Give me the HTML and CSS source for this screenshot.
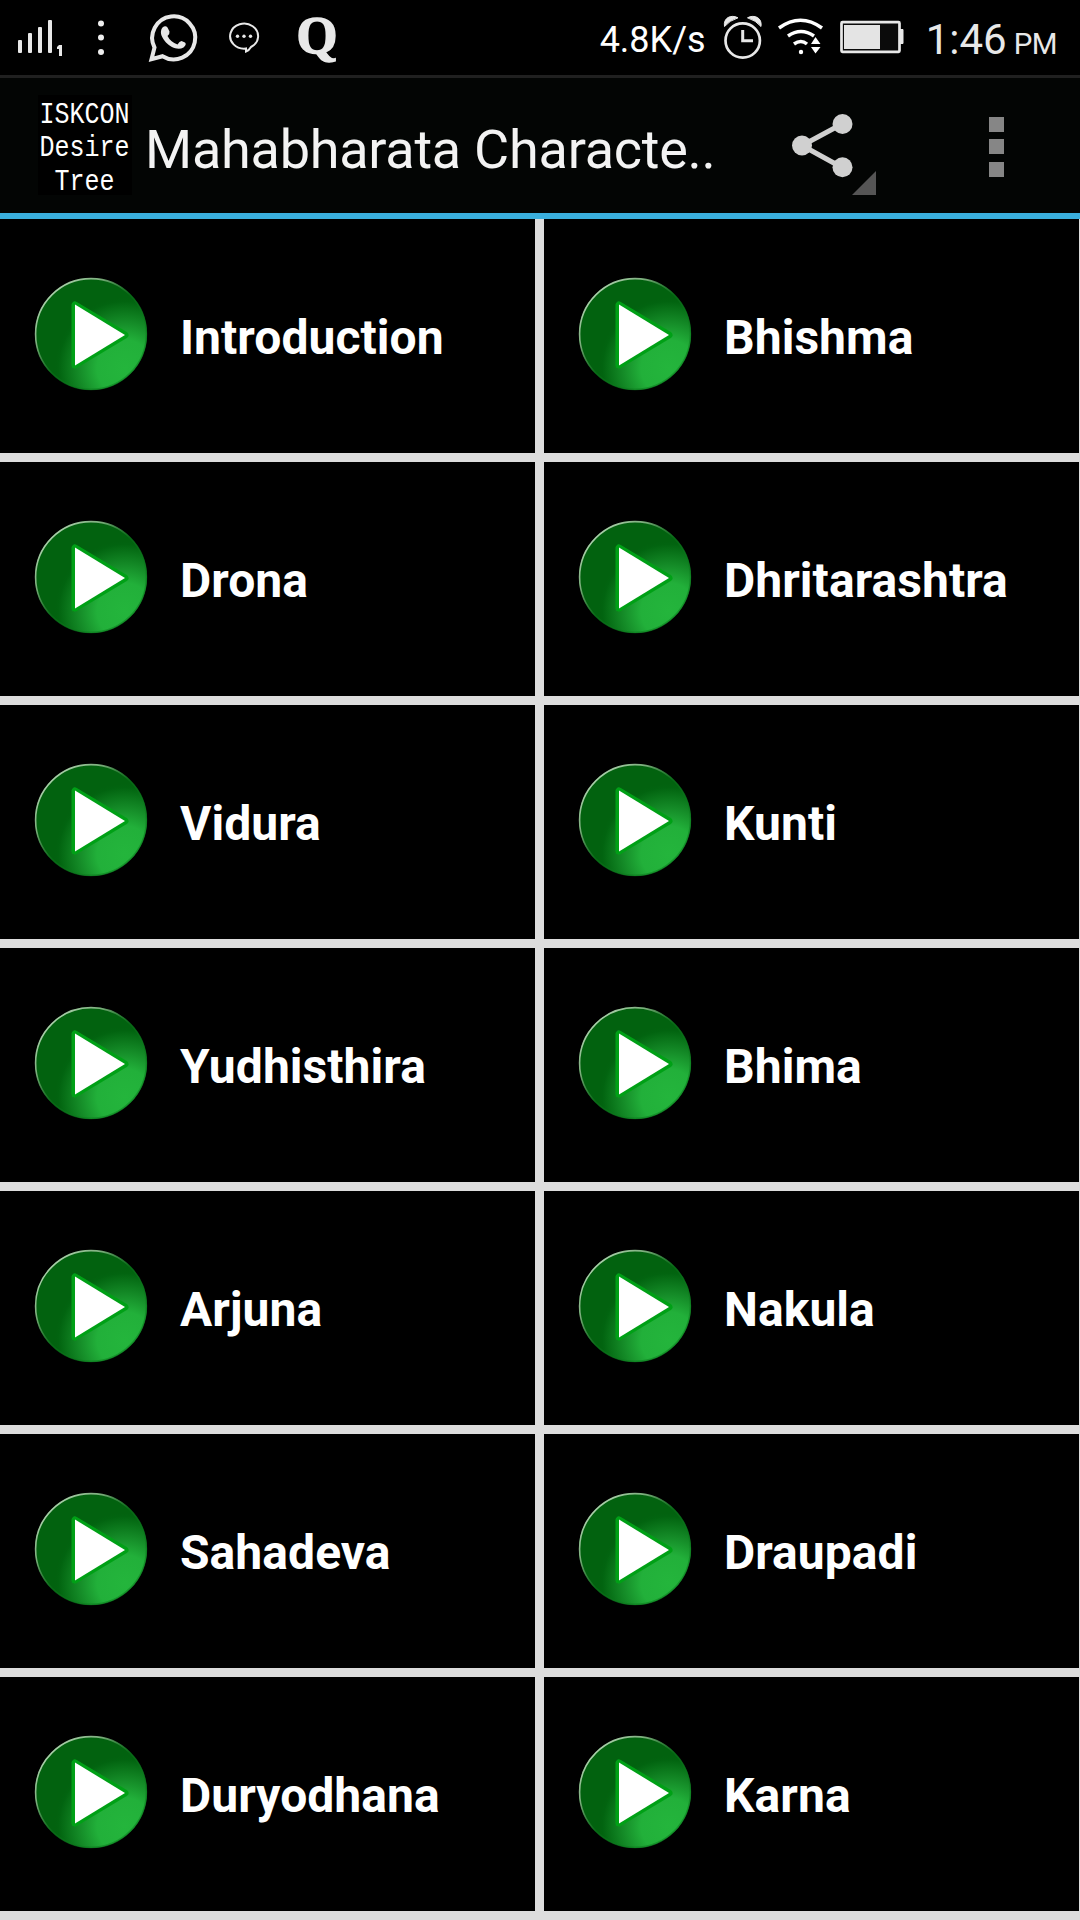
FILE: index.html
```html
<!DOCTYPE html>
<html lang="en">
<head>
<meta charset="utf-8">
<title>Mahabharata Characters</title>
<link rel="stylesheet" href="styles.css">
</head>
<body>
<svg class="defs" width="0" height="0" aria-hidden="true">
  <defs>
    <radialGradient id="disc" gradientUnits="userSpaceOnUse" cx="94" cy="94" r="70">
      <stop offset="0" stop-color="#24b53c"/>
      <stop offset="0.4" stop-color="#22b03a"/>
      <stop offset="0.65" stop-color="#158c28"/>
      <stop offset="0.95" stop-color="#026410"/>
      <stop offset="1" stop-color="#02620f"/>
    </radialGradient>
    <linearGradient id="rim" x1="0.1" y1="0.1" x2="0.9" y2="0.9">
      <stop offset="0" stop-color="#b4d6b4"/>
      <stop offset="0.25" stop-color="#7cac7c"/>
      <stop offset="0.5" stop-color="#0c701b" stop-opacity="0.6"/>
      <stop offset="1" stop-color="#0c8420" stop-opacity="0.6"/>
    </linearGradient>
    <filter id="soft"><feGaussianBlur stdDeviation="0.6"/></filter>
    <symbol id="play" viewBox="0 0 120 120">
      <circle cx="60" cy="60" r="56" fill="url(#disc)"/>
      <circle cx="60" cy="60" r="55.4" fill="none" stroke="url(#rim)" stroke-width="1.6"/>
      <path d="M44 31V91L94 61z" fill="#03a018" stroke="#03a018" stroke-width="7" stroke-linejoin="round" filter="url(#soft)"/>
      <path d="M44 30.500V91.500L94 61z" fill="#fff"/>
    </symbol>
  </defs>
</svg>

<header class="status">
  <div class="status-left">
    <svg class="signal" width="48" height="40" viewBox="0 0 48 40" fill="#e8e8e8">
      <rect x="1" y="22" width="4" height="13" rx="1"/><rect x="11" y="15" width="4" height="20" rx="1"/><rect x="21" y="9" width="4" height="26" rx="1"/><rect x="31" y="2" width="4" height="33" rx="1"/>
      <path d="M42 27h3v11h-3v-7h-2v-2z"/>
    </svg>
    <svg class="dots" width="8" height="40" viewBox="0 0 8 40" fill="#eee"><circle cx="4" cy="5.500" r="3"/><circle cx="4" cy="19.500" r="3"/><circle cx="4" cy="34" r="3"/></svg>
    <svg class="phone" width="48" height="50" viewBox="0 0 48 50">
      <path d="M2.500 46.200L5.500 34.500A21.500 21.500 0 1 1 13.500 43.200z" fill="none" stroke="#e8e8e8" stroke-width="4"/>
      <path d="M13.500 14.500Q16.500 12 18.500 14.500L20.500 18.500Q21 20.500 18.500 23Q21.500 29 28.500 31.500Q30.500 28 32.500 28L36 29.500Q38 31.500 34.500 34.500C25 40 10.500 26 12 18Q12.300 15.700 13.500 14.500z" fill="#e8e8e8"/>
    </svg>
    <svg class="bubble" width="32" height="34" viewBox="0 0 32 34">
      <path d="M17 27.500A14 12.500 0 1 1 22 26Q20 29.500 17 30.500z" fill="none" stroke="#e8e8e8" stroke-width="2"/>
      <g fill="#e8e8e8"><circle cx="8.500" cy="15.300" r="1.700"/><circle cx="15" cy="15.300" r="1.700"/><circle cx="21.500" cy="15.300" r="1.700"/></g>
    </svg>
    <svg class="quora" width="46" height="56" viewBox="0 0 46 56"><text class="quora-text" x="0.500" y="44.500" textLength="41" lengthAdjust="spacingAndGlyphs">Q</text></svg>
  </div>
  <div class="status-right">
    <span class="speed">4.8K/s</span>
    <svg class="alarm" width="40" height="46" viewBox="0 0 40 46">
      <path d="M1.500 12.500C0 4 8 0 15 3.800Q6.500 6.500 1.500 12.500zM38 12.500C39.500 4 31.500 0 24.500 3.800Q33 6.500 38 12.500z" fill="#e8e8e8" stroke="#e8e8e8"/>
      <circle cx="19.700" cy="26.500" r="17.200" fill="none" stroke="#e8e8e8" stroke-width="2.700"/>
      <path d="M19.700 16V26.800H30" fill="none" stroke="#e8e8e8" stroke-width="3"/>
    </svg>
    <svg class="wifi" width="48" height="38" viewBox="0 0 48 38">
      <g fill="none" stroke="#fff" stroke-width="3.500"><path d="M2 10Q23.500-5.500 45 10"/><path d="M11 18Q24 9 37 18"/><path d="M17 26Q24 21 30 26"/></g>
      <circle cx="24" cy="34" r="2.200" fill="#fff"/><path d="M34 26L38.500 19L43.500 26zM34 29H43.500L38.500 35.500z" fill="#fff"/>
    </svg>
    <svg class="battery" width="64" height="34" viewBox="0 0 64 34">
      <rect x="1.500" y="2.200" width="58" height="29.600" rx="1" fill="#0b0b0b" stroke="#e8e8e8" stroke-width="2.700"/>
      <rect x="4" y="5" width="36" height="24" fill="#e4e4e4"/><path d="M60 9.500h3v14h-3z" fill="#e8e8e8" stroke="#e8e8e8"/>
    </svg>
    <span class="clock">1:46</span><span class="meridiem">PM</span>
  </div>
</header>

<nav class="bar">
  <svg class="logo" width="96" height="102" viewBox="0 0 96 102">
    <rect width="94" height="100" fill="#000"/>
    <g class="logo-text">
      <text x="1.500" y="27.500" textLength="90" lengthAdjust="spacingAndGlyphs">ISKCON</text>
      <text x="1.500" y="61" textLength="90" lengthAdjust="spacingAndGlyphs">Desire</text>
      <text x="16.500" y="94.500" textLength="60" lengthAdjust="spacingAndGlyphs">Tree</text>
    </g>
  </svg>
  <h1 class="title">Mahabharata Characte..</h1>
  <svg class="share" width="88" height="86" viewBox="0 0 88 86">
    <path d="M51 14L11 35.500L51 57.500" fill="none" stroke="#d0d0d0" stroke-width="5"/>
    <g fill="#d0d0d0"><circle cx="51.500" cy="14" r="10"/><circle cx="11" cy="35.500" r="10"/><circle cx="51.500" cy="57.300" r="10"/></g>
    <path d="M85 61V85H61z" fill="#555"/>
  </svg>
  <svg class="menu" width="15" height="60" viewBox="0 0 15 60" fill="#868686"><path d="M0 0h15v15H0zM0 22h15v15H0zM0 45h15v15H0z"/></svg>
</nav>

<main class="grid">
  <div class="cell"><svg class="play"><use href="#play"/></svg><span>Introduction</span></div>
  <div class="cell"><svg class="play"><use href="#play"/></svg><span>Bhishma</span></div>
  <div class="cell"><svg class="play"><use href="#play"/></svg><span>Drona</span></div>
  <div class="cell"><svg class="play"><use href="#play"/></svg><span>Dhritarashtra</span></div>
  <div class="cell"><svg class="play"><use href="#play"/></svg><span>Vidura</span></div>
  <div class="cell"><svg class="play"><use href="#play"/></svg><span>Kunti</span></div>
  <div class="cell"><svg class="play"><use href="#play"/></svg><span>Yudhisthira</span></div>
  <div class="cell"><svg class="play"><use href="#play"/></svg><span>Bhima</span></div>
  <div class="cell"><svg class="play"><use href="#play"/></svg><span>Arjuna</span></div>
  <div class="cell"><svg class="play"><use href="#play"/></svg><span>Nakula</span></div>
  <div class="cell"><svg class="play"><use href="#play"/></svg><span>Sahadeva</span></div>
  <div class="cell"><svg class="play"><use href="#play"/></svg><span>Draupadi</span></div>
  <div class="cell"><svg class="play"><use href="#play"/></svg><span>Duryodhana</span></div>
  <div class="cell"><svg class="play"><use href="#play"/></svg><span>Karna</span></div>
</main>
</body>
</html>
```
FILE: styles.css
```css
* { box-sizing: border-box; }
body {
  margin: 0;
  width: 1080px;
  height: 1920px;
  display: flex;
  flex-direction: column;
  overflow: hidden;
  background: #000;
  color: #fff;
  font-family: Roboto, "Liberation Sans", sans-serif;
}
svg { display: block; flex: none; overflow: visible; }
.defs { height: 0; }

.status {
  height: 78px;
  flex: none;
  display: flex;
  justify-content: space-between;
  border-bottom: 3px solid #202020;
}
.status-left, .status-right { display: flex; align-items: flex-start; }
.status-left { padding-left: 17px; }
.signal { margin-top: 18px; }
.dots { margin: 18px 0 0 32px; }
.phone { margin: 13px 0 0 44px; }
.bubble { margin: 21px 0 0 32px; }
.quora { margin: 8px 0 0 35px; }
.quora-text { font: bold 53px "Liberation Serif", serif; fill: #e8e8e8; stroke: #e8e8e8; stroke-width: 1.5px; }
.status-right { padding-right: 23px; }
.speed { font-size: 36px; line-height: 42px; margin-top: 19px; }
.alarm { margin: 14px 0 0 17px; }
.wifi { margin: 18px 0 0 14px; }
.battery { margin: 20px 0 0 15px; }
.clock { font-size: 42px; line-height: 48px; margin: 16px 0 0 22px; color: #e8e8e8; }
.meridiem { font-size: 29.5px; line-height: 36px; margin: 26px 0 0 7px; letter-spacing: -0.5px; color: #e8e8e8; }

.bar {
  height: 141px;
  flex: none;
  display: flex;
  align-items: flex-start;
  padding-left: 38px;
  background: #030504;
  border-bottom: 6px solid #3aafdd;
}
.logo { margin-top: 17px; }
.logo-text { font: 29px "Liberation Mono", monospace; fill: #fff; }
.title {
  margin: 40px 0 0 11px;
  width: 646px;
  font-size: 54px;
  line-height: 64px;
  letter-spacing: -0.25px;
  font-weight: 400;
  color: #f3f3f3;
  white-space: nowrap;
}
.share { margin-top: 32px; }
.menu { margin: 39px 0 0 110px; }

.grid {
  height: 1701px;
  display: grid;
  grid-template-columns: 535px 535px;
  grid-auto-rows: 234px;
  gap: 9px;
  background: #ddd;
}
.cell {
  display: flex;
  align-items: center;
  gap: 29px;
  padding-left: 31px;
  background: #000;
  font-size: 48px;
  line-height: 56px;
  font-weight: 700;
}
.play { width: 120px; height: 120px; margin-bottom: 4px; }
.cell span { padding-top: 4px; letter-spacing: 0.06px; }
```
